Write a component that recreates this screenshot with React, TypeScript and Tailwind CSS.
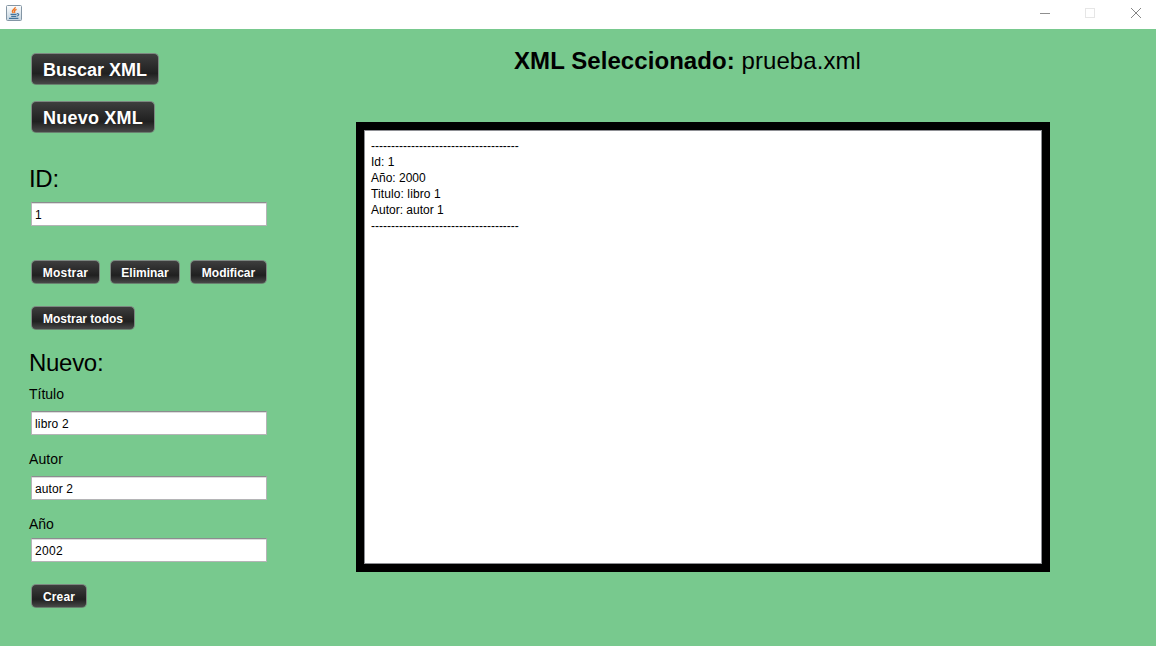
import type { ReactNode } from "react";

function Button({ children, className }: { children: ReactNode; className: string }) {
  return (
    <button
      className={`flex shrink-0 items-center justify-center whitespace-nowrap rounded-[5px] border border-[#7d8781] border-b-[#69806f] bg-linear-to-b from-[#3e3e3e] via-[#202020] via-65% to-[#484848] pt-[2px] font-bold text-white ${className}`}
    >
      {children}
    </button>
  );
}

function Field({ value, className }: { value: string; className: string }) {
  return (
    <input
      defaultValue={value}
      className={`ml-[2px] block h-6 w-[236px] border border-[#b4b4b6] border-t-[#8c8c8f] bg-white px-[3px] pt-px text-xs text-black shadow-[inset_0_1px_0_#dcdcdc] outline-none ${className}`}
    />
  );
}

function JavaIcon() {
  return (
    <svg width="16" height="16" viewBox="0 0 16 16" fill="none">
      <defs>
        <linearGradient id="tile" x1="0" y1="0" x2="0" y2="1">
          <stop offset="0" stopColor="#fdfefe" />
          <stop offset="1" stopColor="#c3d3df" />
        </linearGradient>
      </defs>
      <rect x="0.5" y="0.5" width="15" height="15" rx="1" fill="url(#tile)" stroke="#8496a5" />
      <path d="M9.2 2C9.6 3.9 6 4.8 6.4 6.6L7.4 8M10.6 4.4C8.7 5 7.9 6 8.9 7.8" stroke="#ee7523" strokeWidth="1.4" />
      <path d="M4.5 9.4h6M5.2 11.4h4.8M3 13.4h9.4M10.8 8.7c2.9-.4 2.4 2.2-.3 2.5" stroke="#42739b" strokeWidth="1.1" />
    </svg>
  );
}

const lines = [
  "-------------------------------------",
  "Id: 1",
  "Año: 2000",
  "Titulo: libro 1",
  "Autor: autor 1",
  "-------------------------------------",
];

export default function App() {
  return (
    <div className="flex h-[646px] w-[1156px] flex-col overflow-hidden bg-[#78c98e] font-['Liberation_Sans',Arial,sans-serif] text-black">
      <header className="flex h-[29px] shrink-0 justify-between bg-white pl-[6px] pt-[5px]">
        <JavaIcon />
        <svg width="136" height="24" viewBox="0 0 136 24" fill="none" shapeRendering="crispEdges">
          <path d="M20 8.5h10" stroke="#8f8f8f" />
          <rect x="65.5" y="3.5" width="9" height="9" stroke="#e6e6e6" />
          <path d="M111 3l10 10M121 3l-10 10" stroke="#858585" shapeRendering="auto" />
        </svg>
      </header>
      <main className="flex flex-1">
        <section className="flex w-[356px] shrink-0 flex-col pl-[29px] pt-6">
          <Button className="ml-[2px] h-8 w-32 text-lg">Buscar XML</Button>
          <Button className="ml-[2px] mt-4 h-8 w-[124px] text-lg tracking-[0.2px]">Nuevo XML</Button>
          <h2 className="mt-8 h-7 text-2xl leading-7 tracking-[-0.3px]">ID:</h2>
          <Field value="1" className="mt-[9px]" />
          <div className="ml-[2px] mt-[34px] flex gap-[10px]">
            <Button className="h-6 w-[69px] text-xs tracking-[0.2px]">Mostrar</Button>
            <Button className="h-6 w-[70px] text-xs">Eliminar</Button>
            <Button className="h-6 w-[77px] text-xs">Modificar</Button>
          </div>
          <Button className="ml-[2px] mt-[22px] h-6 w-[104px] text-xs">Mostrar todos</Button>
          <h2 className="mt-[19px] h-7 text-2xl leading-7 tracking-[-0.3px]">Nuevo:</h2>
          <label className="mt-[9px] h-4 text-sm leading-4">Título</label>
          <Field value="libro 2" className="mt-[9px] tracking-[0.15px]" />
          <label className="mt-4 h-4 text-sm leading-4 tracking-[0.1px]">Autor</label>
          <Field value="autor 2" className="mt-[9px] tracking-[0.1px]" />
          <label className="mt-4 h-4 text-sm leading-4">Año</label>
          <Field value="2002" className="mt-[6px] tracking-[0.3px]" />
          <Button className="ml-[2px] mt-[22px] h-6 w-14 text-xs tracking-[0.15px]">Crear</Button>
        </section>
        <section className="flex w-[694px] flex-col pt-[18px]">
          <h1 className="ml-[158px] h-7 whitespace-nowrap text-2xl leading-7 tracking-[0.07px]">
            <b>XML Seleccionado:</b> prueba.xml
          </h1>
          <div className="mt-[47px] h-[450px] border-8 border-black">
            <div className="h-full border border-[#8e8f94] bg-white pl-[6px] pt-[7px] text-xs leading-4">
              {lines.map((line, i) => (
                <p key={i} className={line.startsWith("Titulo") ? "tracking-[0.1px]" : ""}>
                  {line}
                </p>
              ))}
            </div>
          </div>
        </section>
      </main>
    </div>
  );
}
